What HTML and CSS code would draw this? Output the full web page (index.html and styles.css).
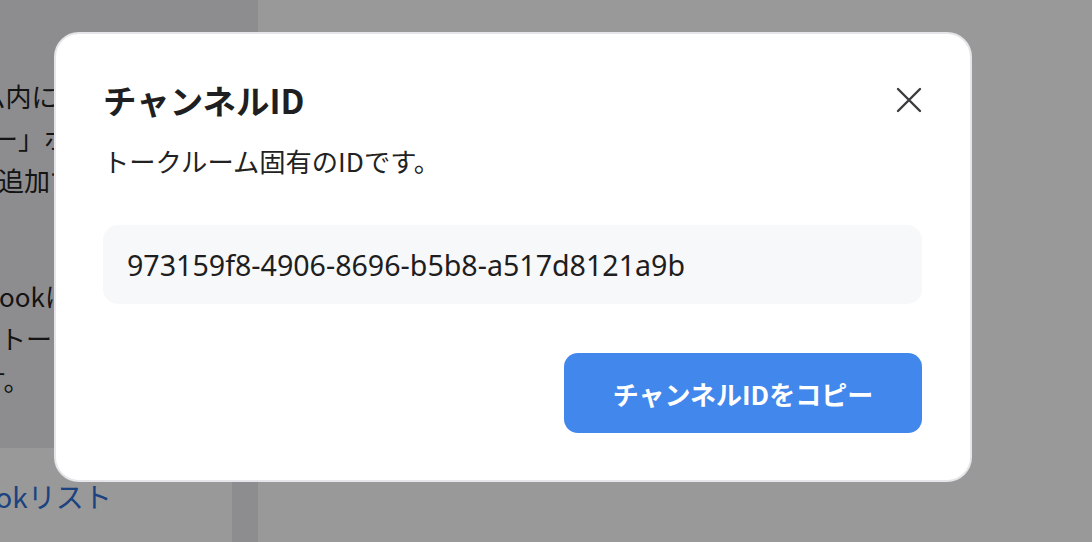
FILE: index.html
```html
<!DOCTYPE html>
<html lang="ja">
<head>
<meta charset="utf-8">
<title>チャンネルID</title>
<link rel="stylesheet" href="styles.css">
</head>
<body>
<div class="page">
  <aside class="sidebar">
    <div class="side-main">
      <div class="side-card">
        <p class="side-para">
          <span class="ln l1">トークルーム内に表示されます</span>
          <span class="ln l2">「メンバー」ボタンから</span>
          <span class="ln l3">追加できます。</span>
        </p>
        <p class="side-para p2">
          <span class="ln l4">Webhookは外部サービスから</span>
          <span class="ln l5">トークルームへ通知を送信しま</span>
          <span class="ln l6">す。</span>
        </p>
      </div>
      <div class="side-bottom">
        <a class="side-link" href="#">Webhookリスト</a>
      </div>
    </div>
    <div class="side-gutter"></div>
  </aside>
  <main class="main"></main>
</div>

<div class="overlay"></div>

<section class="modal" role="dialog" aria-labelledby="modal-title">
  <header class="modal-head">
    <h2 class="modal-title" id="modal-title">チャンネルID</h2>
    <button class="close-btn" aria-label="閉じる">
      <svg width="26" height="26" viewBox="0 0 26 26" fill="none" stroke="#3b3b3e" stroke-width="2.4" stroke-linecap="round">
        <path d="M2 2 L24 24 M24 2 L2 24"/>
      </svg>
    </button>
  </header>
  <p class="modal-desc">トークルーム固有のIDです。</p>
  <div class="id-box">973159f8-4906-8696-b5b8-a517d8121a9b</div>
  <div class="modal-actions">
    <button class="copy-btn">チャンネルIDをコピー</button>
  </div>
</section>
</body>
</html>
```

FILE: styles.css
```css
* { box-sizing: border-box; }

html, body {
  margin: 0;
  padding: 0;
  width: 1092px;
  height: 542px;
  overflow: hidden;
  font-family: "Noto Sans CJK JP", "Noto Sans", sans-serif;
  color: #222;
  background: #fff;
}

.page {
  display: flex;
  width: 1092px;
  height: 542px;
}

.sidebar {
  width: 258px;
  display: flex;
  background: #ececef;
  flex-shrink: 0;
}

.side-main {
  width: 232px;
  display: flex;
  flex-direction: column;
  overflow: hidden;
}

.side-card {
  height: 448px;
  background: #ececef;
  padding-top: 75px;
}

.side-para {
  margin: 0;
  font-size: 26px;
  line-height: 42px;
  white-space: nowrap;
  color: #222;
}

.side-para.p2 {
  margin-top: 74px;
}

.ln { display: block; }
.l1 { margin-left: -149px; }
.l2 { margin-left: -112px; }
.l3 { margin-left: -2px; }
.l4 { margin-left: -70px; }
.l5 { margin-left: 0; }
.l6 { margin-left: -20px; }

.side-bottom {
  flex: 1;
  background: #fff;
  padding-top: 28px;
}

.side-link {
  display: block;
  margin-left: -96px;
  font-size: 28px;
  line-height: 40px;
  color: #2f6fd6;
  text-decoration: none;
  white-space: nowrap;
}

.side-gutter {
  width: 26px;
  background: #ececef;
}

.main {
  flex: 1;
  background: #fff;
}

.overlay {
  position: fixed;
  inset: 0;
  background: rgba(0, 0, 0, 0.4);
}

.modal {
  position: absolute;
  left: 54px;
  top: 32px;
  width: 918px;
  height: 450px;
  background: #fff;
  border: 2px solid #e6e6ea;
  border-radius: 25px;
  padding: 47px 48px 47px 47px;
  display: flex;
  flex-direction: column;
}

.modal-head {
  display: flex;
  justify-content: space-between;
  align-items: center;
  height: 38px;
}

.modal-title {
  margin: 0;
  font-size: 33.5px;
  line-height: 38px;
  font-weight: 700;
  color: #1f1f21;
  letter-spacing: 0;
}

.close-btn {
  width: 26px;
  height: 26px;
  padding: 0;
  border: 0;
  background: none;
  display: flex;
  align-items: center;
  justify-content: center;
}

.modal-desc {
  margin: 24px 0 0;
  font-size: 26.3px;
  line-height: 36px;
  color: #222;
}

.id-box {
  margin-top: 46px;
  height: 79px;
  background: #f7f8fa;
  border-radius: 15px;
  padding: 0 24px;
  display: flex;
  align-items: center;
  font-family: "Noto Sans", "Noto Sans CJK JP", sans-serif;
  font-size: 28.6px;
  color: #1e1e20;
}

.modal-actions {
  margin-top: 49px;
  display: flex;
  justify-content: flex-end;
}

.copy-btn {
  width: 358px;
  height: 80px;
  border: 0;
  border-radius: 14px;
  background: #4287ec;
  color: #fff;
  font-family: "Noto Sans CJK JP", "Noto Sans", sans-serif;
  font-size: 26px;
  font-weight: 700;
}
```
